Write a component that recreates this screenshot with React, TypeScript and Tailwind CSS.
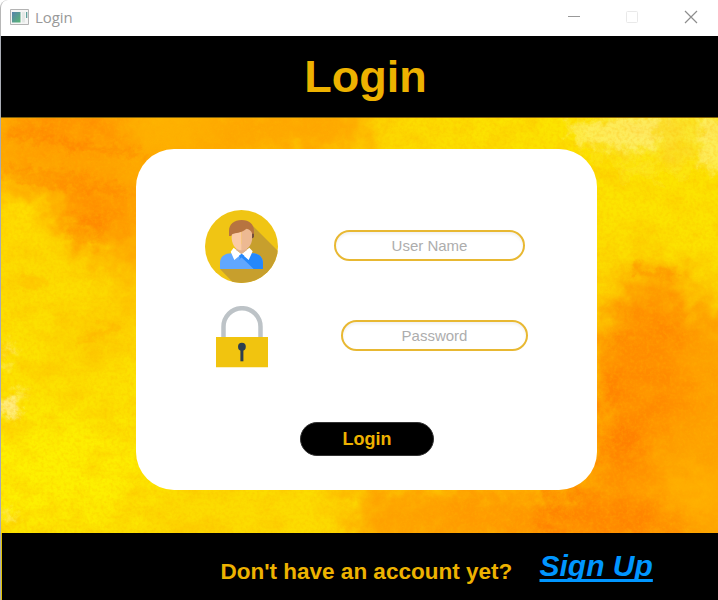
import React from 'react';

function PaintBackdrop() {
  return (
    <svg className="absolute inset-0 h-full w-full" viewBox="0 117 718 417" preserveAspectRatio="none" aria-hidden="true">
      <defs>
        <filter id="wash" x="-20%" y="-20%" width="140%" height="140%">
          <feGaussianBlur stdDeviation="17" result="b" />
          <feTurbulence type="fractalNoise" baseFrequency="0.06" numOctaves="5" seed="4" result="n" />
          <feDisplacementMap in="b" in2="n" scale="46" xChannelSelector="R" yChannelSelector="G" />
        </filter>
        <filter id="rough" x="-30%" y="-30%" width="160%" height="160%">
          <feGaussianBlur stdDeviation="3" result="b" />
          <feTurbulence type="fractalNoise" baseFrequency="0.12" numOctaves="4" seed="9" result="n" />
          <feDisplacementMap in="b" in2="n" scale="22" xChannelSelector="R" yChannelSelector="G" />
        </filter>
        <filter id="grain" x="0" y="0" width="100%" height="100%">
          <feTurbulence type="fractalNoise" baseFrequency="0.035 0.05" numOctaves="6" seed="21" />
          <feColorMatrix values="0 0 0 0 1  0 0 0 0 0.42  0 0 0 0 0  2 0 0 0 -0.85" />
        </filter>
        <filter id="speck" x="0" y="0" width="100%" height="100%">
          <feTurbulence type="fractalNoise" baseFrequency="0.3" numOctaves="2" seed="6" />
          <feColorMatrix values="0 0 0 0 0.98  0 0 0 0 0.48  0 0 0 0 0  1.6 0 0 0 -0.66" />
        </filter>
      </defs>
      <rect y="117" width="718" height="417" fill="#fcdc00" />
      <g filter="url(#wash)">
        <ellipse cx="80" cy="385" rx="110" ry="90" fill="#fce200" />
        <ellipse cx="45" cy="475" rx="105" ry="55" fill="#fdf000" />
        <path d="M-30 90H370V160H250L175 230L150 290L115 262L70 240L45 205L-30 192Z" fill="#fea600" />
        <ellipse cx="15" cy="218" rx="40" ry="26" fill="#fee000" />
        <ellipse cx="65" cy="122" rx="60" ry="24" fill="#ff8b00" />
        <ellipse cx="90" cy="212" rx="36" ry="30" fill="#ff8900" />
        <ellipse cx="170" cy="128" rx="45" ry="22" fill="#feb400" />
        <ellipse cx="128" cy="290" rx="14" ry="46" fill="#febb00" opacity=".8" />
        <ellipse cx="90" cy="338" rx="38" ry="22" fill="#fdc400" opacity=".8" />
        <path d="M470 90H750V250H590L560 160H450Z" fill="#fce400" />
        <ellipse cx="660" cy="130" rx="60" ry="18" fill="#fbea40" />
        <path d="M585 335L612 300L630 262L670 262L700 300L755 330V560H360L350 480H585Z" fill="#fea000" />
        <ellipse cx="650" cy="325" rx="46" ry="20" fill="#ff8600" />
        <ellipse cx="640" cy="390" rx="52" ry="44" fill="#ff8a00" />
        <ellipse cx="618" cy="450" rx="36" ry="30" fill="#ff8300" />
        <ellipse cx="610" cy="525" rx="90" ry="28" fill="#ff8000" />
        <ellipse cx="475" cy="510" rx="45" ry="16" fill="#ff9400" />
        <ellipse cx="695" cy="495" rx="34" ry="24" fill="#ffb500" />
      </g>
      <rect y="117" width="718" height="417" filter="url(#grain)" opacity=".36" />
      <g filter="url(#rough)">
        <path d="M0 170L55 174L90 176M10 180L70 185L125 190" fill="none" stroke="#ff7600" strokeWidth="4" opacity=".7" />
        <path d="M5 134L55 140L85 147L140 152" fill="none" stroke="#ff7600" strokeWidth="4" opacity=".7" />
        <ellipse cx="90" cy="222" rx="16" ry="8" fill="#ff7c00" opacity=".5" />
        <path d="M65 230L80 238L105 238" fill="none" stroke="#ff8100" strokeWidth="5" opacity=".5" />
        <path d="M80 345L98 332L116 327" fill="none" stroke="#ffaf00" strokeWidth="8" opacity=".6" />
        <ellipse cx="31" cy="282" rx="15" ry="6" fill="#ffbd00" opacity=".6" />
        <ellipse cx="8" cy="408" rx="12" ry="10" fill="#fff09a" opacity=".8" />
        <path d="M3 345L14 350M3 365L10 368M0 514L14 518M10 397L24 393" stroke="#fff08a" strokeWidth="5" opacity=".8" />
        <path d="M565 124L580 143L620 149L655 148L655 130L665 115L640 115ZM700 118L730 118V174L700 166Z" fill="#fff591" opacity=".5" />
        <path d="M630 268L650 273L676 275M613 342L640 334L680 330" fill="none" stroke="#ff8400" strokeWidth="6" opacity=".6" />
        <ellipse cx="612" cy="388" rx="8" ry="20" fill="#ff7a00" opacity=".45" />
        <ellipse cx="625" cy="440" rx="14" ry="12" fill="#ff7a00" opacity=".45" />
        <path d="M540 492H548M568 494H580M546 508L566 512M538 528H548" stroke="#ff7200" strokeWidth="7" opacity=".55" />
      </g>
      <rect y="117" width="718" height="417" filter="url(#speck)" opacity=".42" />
    </svg>
  );
}

function PersonIcon() {
  return (
    <svg className="h-[73px] w-[73px]" viewBox="45 30 219 219" aria-hidden="true">
      <defs>
        <clipPath id="disc"><circle cx="154.5" cy="139.5" r="109.5" /></clipPath>
      </defs>
      <g clipPath="url(#disc)">
        <path d="M45 30H264V249H45Z" fill="#f0c514" />
        <path d="M188 77L280 169V265H146L90 207L150 175Z" fill="#c79f2d" />
      </g>
      <path d="M90 207V189C90 170 104 160 124 160H188C207 160 219 172 219 190V207Z" fill="#60a7ff" />
      <path d="M154.5 165L188 160C207 160 219 172 219 190V207H191L154.5 172Z" fill="#2488fc" />
      <path d="M131 143L154 162L178 143L188 154L176 180L155 162L133 180L122 155Z" fill="#fff" />
      <path d="M147 167L155 161L163 167L160 173L164 180L155 172L146 180L150 173Z" fill="#2488fc" />
      <path d="M138 133H171V150L155 162L138 150Z" fill="#deb08e" />
      <path d="M125 93H155V151C139 151 127 137 125 116Z" fill="#fbcba5" />
      <path d="M155 86H187V115C185 137 172 151 155 151Z" fill="#edb992" />
      <path d="M117 108V93C117 73 132 60 155 60C178 60 192 73 192 93V106H187C187 95 180 88 169 86C157 98 143 97 131 101C126 102 124 105 124 108Z" fill="#b77440" />
      <path d="M186 101H192V111L188 115H186Z" fill="#744e3c" />
    </svg>
  );
}

function LockIcon() {
  return (
    <svg className="h-[62px] w-[53px]" viewBox="0 0 53 62" aria-hidden="true">
      <path d="M7.5 31V20.8a18.5 18.6 0 0 1 37 0V31" fill="none" stroke="#bdc3c7" strokeWidth="4.5" />
      <path d="M0 31H52V61.3H0Z" fill="#f1c40f" />
      <path d="M24.4 41H27.4V55.3H24.4Z" fill="#2c3e50" />
      <circle cx="25.9" cy="40.7" r="3.9" fill="#2c3e50" />
    </svg>
  );
}

const field =
  'h-[31px] rounded-full border-2 border-[#e8b832] bg-white p-0 text-center text-[15px] text-[#888] outline-none shadow-[inset_0_2px_3px_rgba(0,0,0,0.06)] placeholder:text-[#adadad] placeholder:opacity-100';

export default function App() {
  return (
    <div className="flex h-[600px] w-[718px] flex-col overflow-hidden bg-white font-['Liberation_Sans',Arial,sans-serif]">
      <div className="flex h-9 shrink-0 items-center rounded-tl-lg border-l border-[#b7b7b7] bg-white pl-[9px]">
        <svg className="mb-[3px] h-[16px] w-[19px]" viewBox="0 0 19 16" aria-hidden="true">
          <defs>
            <linearGradient id="pane" x1="0" y1="0" x2="1" y2="1">
              <stop offset="0" stopColor="#5782ad" />
              <stop offset="1" stopColor="#58b774" />
            </linearGradient>
          </defs>
          <path d="M.5.5H18.5V15.5H.5Z" fill="#f5f5f5" stroke="#b3b3b3" />
          <path d="M2 3H10.5V13.5H2Z" fill="url(#pane)" />
          <path d="M12 3H15V13.5H12Z" fill="#e4e8e6" />
          <path d="M16 3H17.3V9H16Z" fill="#5f9f9b" />
        </svg>
        <span className="mb-[2px] ml-[6px] text-[15px] leading-5 text-[#999] font-['Open_Sans','Noto_Sans',sans-serif] tracking-[-0.1px]">Login</span>
        <div className="mb-[3px] ml-auto flex items-center pr-[20px]">
          <svg width="130" height="14" viewBox="0 0 130 14" fill="none" aria-hidden="true">
            <path d="M0 6.5H12" stroke="#999" />
            <rect x="58.5" y="1.5" width="11" height="11" rx="1" stroke="#e9e9e9" />
            <path d="M117 1L129 13M129 1L117 13" stroke="#8d8d8d" strokeWidth="1.2" />
          </svg>
        </div>
      </div>
      <div className="flex min-h-0 grow flex-col border-l border-[#a9adb5]">
        <header className="flex h-[81px] shrink-0 justify-center bg-black">
          <h1 className="mt-[15px] ml-[12px] text-[45px] leading-[52px] font-bold text-[#edb200]">Login</h1>
        </header>
        <main className="relative h-[416px] shrink-0 overflow-hidden border-t border-[#806008]">
          <PaintBackdrop />
          <form className="relative mt-[30.5px] ml-[135px] flex h-[341px] w-[461px] flex-col rounded-[38px] bg-white pt-[61.5px]" onSubmit={(e) => e.preventDefault()}>
            <div className="flex h-[73px] items-center pl-[69px]">
              <PersonIcon />
              <input className={`${field} mb-[2px] ml-[56px] w-[191px]`} placeholder="User Name" aria-label="User Name" />
            </div>
            <div className="mt-[23px] flex h-[61px] items-center pl-[80px]">
              <LockIcon />
              <input type="password" className={`${field} mb-[2px] ml-[72px] w-[187px]`} placeholder="Password" aria-label="Password" />
            </div>
            <button className="mt-[54.5px] ml-[163.5px] h-[34px] w-[134px] rounded-full border border-[#333] bg-black pl-[1px] text-[18px] leading-none font-bold text-[#edb200]">Login</button>
          </form>
        </main>
        <footer className="flex min-h-0 grow border-l border-[#e0c000] bg-black">
          <p className="mt-[25px] ml-[218.5px] w-[292px] text-[22.5px] leading-7 font-bold whitespace-nowrap text-[#edb200]">Don't have an account yet?</p>
          <a className="mt-[15px] ml-[27px] text-[30px] leading-[36px] font-bold whitespace-nowrap text-[#0096ff] italic underline decoration-[3px] underline-offset-[3px] [text-decoration-skip-ink:none]" href="#signup">Sign Up</a>
        </footer>
      </div>
    </div>
  );
}
